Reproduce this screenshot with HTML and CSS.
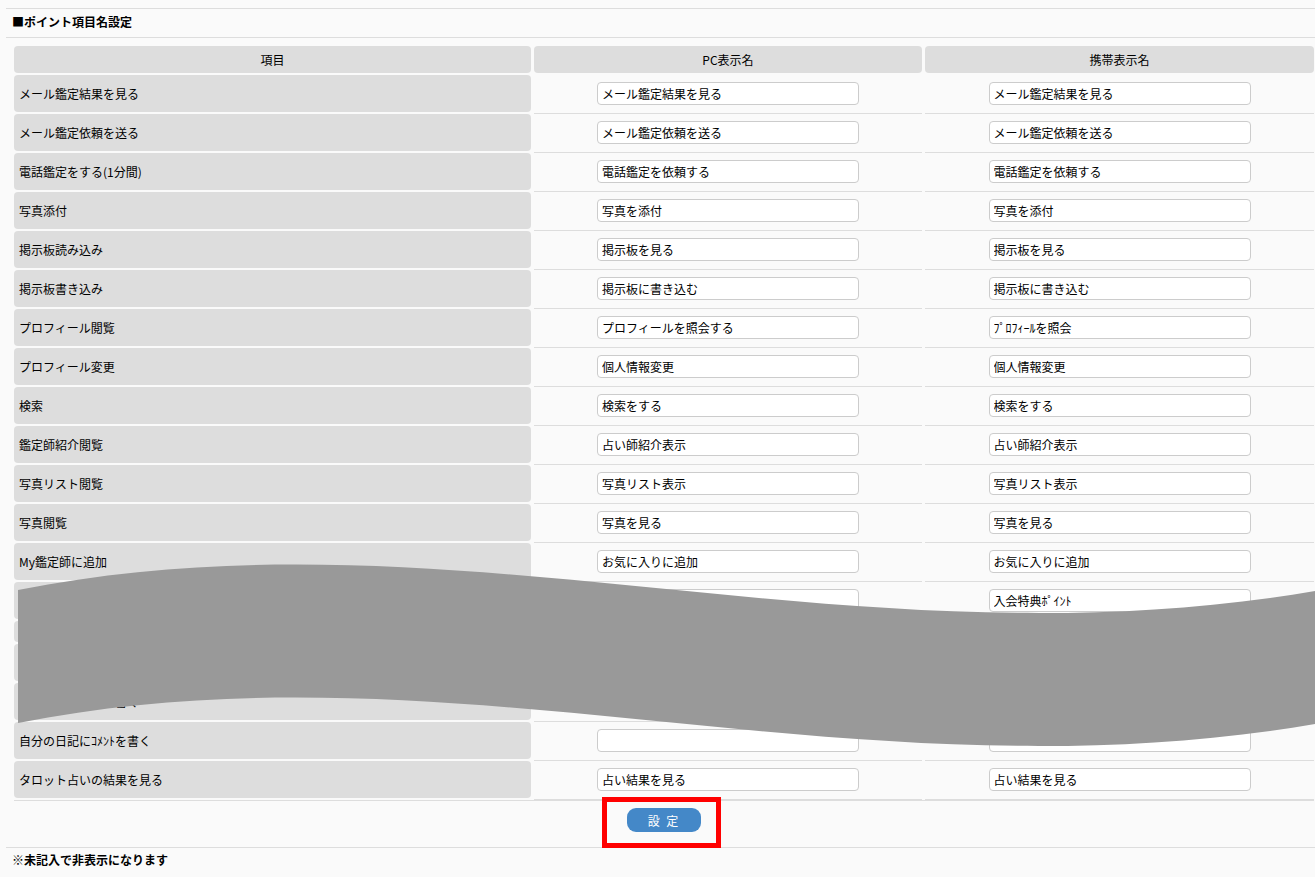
FILE: index.html
```html
<!DOCTYPE html>
<html lang="ja">
<head>
    <meta charset="UTF-8">
    <title>ポイント項目名設定</title>
    <link rel="stylesheet" href="styles.css">
</head>
<body>
    <div class="page">
        <div class="title">■ポイント項目名設定</div>

        <form class="sheet" action="#" method="POST">
            <div class="row head">
                <div class="cell">項目</div>
                <div class="cell">PC表示名</div>
                <div class="cell">携帯表示名</div>
            </div>

            <div class="row">
                <div class="name">メール鑑定結果を見る</div>
                <div class="field"><input class="txt" type="text" value="メール鑑定結果を見る"></div>
                <div class="field"><input class="txt" type="text" value="メール鑑定結果を見る"></div>
            </div>
            <div class="row">
                <div class="name">メール鑑定依頼を送る</div>
                <div class="field"><input class="txt" type="text" value="メール鑑定依頼を送る"></div>
                <div class="field"><input class="txt" type="text" value="メール鑑定依頼を送る"></div>
            </div>
            <div class="row">
                <div class="name">電話鑑定をする(1分間)</div>
                <div class="field"><input class="txt" type="text" value="電話鑑定を依頼する"></div>
                <div class="field"><input class="txt" type="text" value="電話鑑定を依頼する"></div>
            </div>
            <div class="row">
                <div class="name">写真添付</div>
                <div class="field"><input class="txt" type="text" value="写真を添付"></div>
                <div class="field"><input class="txt" type="text" value="写真を添付"></div>
            </div>
            <div class="row">
                <div class="name">掲示板読み込み</div>
                <div class="field"><input class="txt" type="text" value="掲示板を見る"></div>
                <div class="field"><input class="txt" type="text" value="掲示板を見る"></div>
            </div>
            <div class="row">
                <div class="name">掲示板書き込み</div>
                <div class="field"><input class="txt" type="text" value="掲示板に書き込む"></div>
                <div class="field"><input class="txt" type="text" value="掲示板に書き込む"></div>
            </div>
            <div class="row">
                <div class="name">プロフィール閲覧</div>
                <div class="field"><input class="txt" type="text" value="プロフィールを照会する"></div>
                <div class="field"><input class="txt" type="text" value="ﾌﾟﾛﾌｨｰﾙを照会"></div>
            </div>
            <div class="row">
                <div class="name">プロフィール変更</div>
                <div class="field"><input class="txt" type="text" value="個人情報変更"></div>
                <div class="field"><input class="txt" type="text" value="個人情報変更"></div>
            </div>
            <div class="row">
                <div class="name">検索</div>
                <div class="field"><input class="txt" type="text" value="検索をする"></div>
                <div class="field"><input class="txt" type="text" value="検索をする"></div>
            </div>
            <div class="row">
                <div class="name">鑑定師紹介閲覧</div>
                <div class="field"><input class="txt" type="text" value="占い師紹介表示"></div>
                <div class="field"><input class="txt" type="text" value="占い師紹介表示"></div>
            </div>
            <div class="row">
                <div class="name">写真リスト閲覧</div>
                <div class="field"><input class="txt" type="text" value="写真リスト表示"></div>
                <div class="field"><input class="txt" type="text" value="写真リスト表示"></div>
            </div>
            <div class="row">
                <div class="name">写真閲覧</div>
                <div class="field"><input class="txt" type="text" value="写真を見る"></div>
                <div class="field"><input class="txt" type="text" value="写真を見る"></div>
            </div>
            <div class="row">
                <div class="name">My鑑定師に追加</div>
                <div class="field"><input class="txt" type="text" value="お気に入りに追加"></div>
                <div class="field"><input class="txt" type="text" value="お気に入りに追加"></div>
            </div>
            <div class="row">
                <div class="name">入会特典ポイント</div>
                <div class="field"><input class="txt" type="text" value="入会特典ポイント"></div>
                <div class="field"><input class="txt" type="text" value="入会特典ﾎﾟｲﾝﾄ"></div>
            </div>
            <div class="row cut">
                <div class="name"></div>
                <div class="field"></div>
                <div class="field"></div>
            </div>
            <div class="row">
                <div class="name">日記閲覧</div>
                <div class="field"><input class="txt" type="text" value="日記を見る"></div>
                <div class="field"><input class="txt" type="text" value="日記を見る"></div>
            </div>
            <div class="row">
                <div class="name">日記にコメントを書く</div>
                <div class="field"><input class="txt" type="text" value=""></div>
                <div class="field"><input class="txt" type="text" value=""></div>
            </div>
            <div class="row">
                <div class="name">自分の日記にｺﾒﾝﾄを書く</div>
                <div class="field"><input class="txt" type="text" value=""></div>
                <div class="field"><input class="txt" type="text" value=""></div>
            </div>
            <div class="row">
                <div class="name">タロット占いの結果を見る</div>
                <div class="field"><input class="txt" type="text" value="占い結果を見る"></div>
                <div class="field"><input class="txt" type="text" value="占い結果を見る"></div>
            </div>

            <div class="actions">
                <button type="submit" class="btn">設 定</button>
                <span class="mark"></span>
            </div>
        </form>

        <div class="note">※未記入で非表示になります</div>
    </div>

    <!-- 省略部分の波形 -->
    <svg class="wave" width="1315" height="877" viewBox="0 0 1315 877">
        <path d="M18,590 C450,504 850,670 1315,591 L1315,724 C850,803 450,637 18,723 Z" fill="#999999"/>
    </svg>
</body>
</html>
```

FILE: styles.css
```css
body {
    margin: 0;
    background: #fafafa;
    font-family: "Noto Sans CJK JP", "Liberation Sans", sans-serif;
    font-size: 12px;
    color: #000;
}
.page {
    padding: 8px 0 0 6px;
}
.title {
    border-top: 1px solid #dddddd;
    border-bottom: 1px solid #dddddd;
    height: 28px;
    line-height: 26px;
    padding-left: 6px;
    font-weight: bold;
}
.sheet {
    margin: 8px 0 0 8px;
    width: 1300px;
}
.row {
    display: grid;
    grid-template-columns: 517px 388px 389px;
    column-gap: 3px;
    align-items: start;
}
.head .cell {
    height: 27px;
    line-height: 27px;
    background: #dddddd;
    border-radius: 4px;
    text-align: center;
    margin-bottom: 2px;
}
.name {
    height: 37px;
    line-height: 37px;
    background: #dddddd;
    border-radius: 4px;
    padding-left: 5px;
    margin-bottom: 2px;
    white-space: nowrap;
    overflow: hidden;
}
.field {
    box-sizing: border-box;
    height: 39px;
    padding-top: 7px;
    border-bottom: 1px solid #dddddd;
    display: flex;
    justify-content: center;
}
.cut .name {
    height: 21px;
}
.cut .field {
    height: 23px;
}
.txt {
    box-sizing: border-box;
    width: 262px;
    height: 23px;
    margin: 0;
    padding: 0 4px;
    border: 1px solid #cccccc;
    border-radius: 4px;
    background: #fff;
    font-family: inherit;
    font-size: 12px;
    color: #000;
}
.actions {
    position: relative;
    border-top: 1px solid #dddddd;
    height: 47px;
    padding-top: 7px;
    box-sizing: border-box;
    text-align: center;
}
.btn {
    width: 74px;
    height: 24px;
    border: none;
    border-radius: 9px;
    background: #4488c8;
    color: #fff;
    font-family: inherit;
    font-size: 12px;
    letter-spacing: 2px;
    cursor: pointer;
}
.mark {
    position: absolute;
    left: 588px;
    top: -4px;
    width: 119px;
    height: 51px;
    box-sizing: border-box;
    border: 5px solid #ff0000;
}
.note {
    border-top: 1px solid #dddddd;
    line-height: 24px;
    padding-left: 6px;
    font-weight: bold;
}
.wave {
    position: absolute;
    left: 0;
    top: 0;
    pointer-events: none;
}
```
